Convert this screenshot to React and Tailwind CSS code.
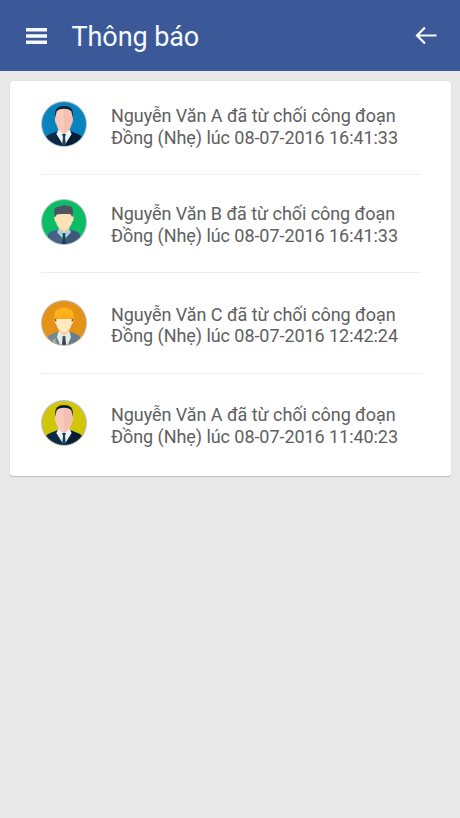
import React from "react";

function SuitMan({ id, bg }) {
  return (
    <svg viewBox="0 0 138 138" className="block h-[46px] w-[46px]">
      <defs>
        <clipPath id={id}>
          <circle cx="69" cy="69" r="66" />
        </clipPath>
      </defs>
      <circle cx="69" cy="69" r="69" fill="#b4c2c6" />
      <g clipPath={`url(#${id})`}>
        <rect width="138" height="138" fill={bg} />
        <path d="M43 44C40 24 52 15 69 15s29 9 26 29l-3 12H46z" fill="#0b2034" />
        <path d="M55 76h28v22l-14 18-14-18z" fill="#e3a793" />
        <path d="M16 138c-8-24-2-34 10-38l26-11 17 49z" fill="#0e2944" />
        <path d="M122 138c8-24 2-34-10-38L86 89l-17 49z" fill="#071d35" />
        <path d="M53 85l16 15 16-15 7 14-23 37-23-37z" fill="#eef3f4" />
        <path d="M63 99h12l-3 9 3 28H63l3-28z" fill="#174158" />
        <path d="M43 49l4-18c5-6 13-8 22-8v73c-13-2-20-13-23-27-4-3-5-15-3-20z" fill="#f8cabc" />
        <path d="M95 49l-4-18c-5-6-13-8-22-8v73c13-2 20-13 23-27 4-3 5-15 3-20z" fill="#f4c0b1" />
      </g>
    </svg>
  );
}

function YoungMan() {
  return (
    <svg viewBox="0 0 138 138" className="block h-[46px] w-[46px]">
      <defs>
        <clipPath id="young">
          <circle cx="69" cy="69" r="66" />
        </clipPath>
      </defs>
      <circle cx="69" cy="69" r="69" fill="#b2c4bb" />
      <g clipPath="url(#young)">
        <rect width="138" height="138" fill="#0abd66" />
        <path d="M20 138v-25c1-11 7-14 15-16l19-8 15 49z" fill="#486087" />
        <path d="M118 138v-25c-1-11-7-14-15-16l-19-8-15 49z" fill="#405678" />
        <path d="M54 76h30v22l-15 12-15-12z" fill="#f1d19f" />
        <path d="M54 87l15 16 15-16 6 13-15 16-6-12-6 12-15-16z" fill="#a8cfe0" />
        <path d="M64 103h10l-2 8 3 27H63l3-27z" fill="#243951" />
        <path d="M41 53l6-8h44l6 8c2 3 0 15-4 16-3 14-12 24-24 24S48 83 45 69c-4-1-6-13-4-16z" fill="#fde2b7" />
        <path d="M43 55c-4-12-5-19-1-28 4-5 13-3 21-7 5-2 13-1 17 1 12 0 16 5 15 12 2 7 1 13-1 22l-5-9c-12-1-25-1-37 0-5 0-7 3-9 9z" fill="#4e5360" />
      </g>
    </svg>
  );
}

function Worker() {
  return (
    <svg viewBox="0 0 138 138" className="block h-[46px] w-[46px]">
      <defs>
        <clipPath id="worker">
          <circle cx="69" cy="69" r="66" />
        </clipPath>
      </defs>
      <circle cx="69" cy="69" r="69" fill="#c4bba9" />
      <g clipPath="url(#worker)">
        <rect width="138" height="138" fill="#e59218" />
        <path d="M20 138c-4-22-1-32 13-36l21-8 15 44z" fill="#708894" />
        <path d="M118 138c4-22 1-32-13-36l-21-8-15 44z" fill="#667d8b" />
        <path d="M55 76h28v22l-14 11-14-11z" fill="#f5cf9b" />
        <path d="M53 93l16 14 16-14 5 18-11 27H59l-11-27z" fill="#e3ebe6" />
        <path d="M64 109h10l-1 6 3 23H62l3-23z" fill="#3c4457" />
        <path d="M42 56h54c3 4 1 14-3 15-4 15-13 26-24 26S49 86 45 71c-4-1-6-11-3-15z" fill="#ffe9c1" />
        <path d="M41 57h5v9l-4-2zM97 57h-5v9l4-2z" fill="#875326" />
        <path d="M40 51c-1-17 7-25 21-26 4-3 12-3 16 0 14 1 22 9 21 26v6H40z" fill="#ffb31b" />
        <path d="M38 50c20-5 42-5 62 0v7H38z" fill="#fcaa19" />
        <path d="M36 119l9 12M43 116l-6 17" stroke="#c9cda9" strokeWidth="3" />
      </g>
    </svg>
  );
}

function Notice({ avatar, name, time, className }) {
  return (
    <li className={`mr-[30px] ml-[31px] flex items-start ${className}`}>
      <div className="shrink-0">{avatar}</div>
      <p className="mt-1 ml-[24.5px] text-[18px] leading-[21.5px] tracking-[-0.06px] whitespace-nowrap text-[#606060]">
        <span className="block">Nguyễn Văn {name} đã từ chối công đoạn</span>
        <span className="block">Đồng (Nhẹ) lúc {time}</span>
      </p>
    </li>
  );
}

export default function App() {
  return (
    <div className="min-h-screen bg-[#e9e9e9] font-['Roboto',sans-serif]">
      <header className="flex h-[71px] items-center bg-[#3b5998] pt-[1px] pr-[23px] pl-[25.5px] text-[#f6faff]">
        <button aria-label="Menu">
          <svg viewBox="0 0 21 16" className="block h-4 w-[21px]" fill="currentColor">
            <path d="M0 0h21v3.5H0zM0 6.25h21v3.5H0zM0 12.5h21V16H0z" />
          </svg>
        </button>
        <h1 className="ml-[25px] pt-[2px] text-[27px] leading-8 font-normal tracking-[-0.08px]">Thông báo</h1>
        <button className="ml-auto" aria-label="Back">
          <svg viewBox="0 0 22 18" className="block h-[18px] w-[22px]" fill="none" stroke="currentColor" strokeWidth="2.2">
            <path d="M21.5 8.5H2M10 0.5l-8 8 8 8" />
          </svg>
        </button>
      </header>
      <main className="px-[9.5px] pt-[9.5px]">
        <ul className="rounded-[3px] bg-white shadow-[0_1px_1px_#bcbcbc,0_0_1px_#c4c4c4]">
          <Notice className="h-[94px] border-b border-[#eeeeee] pt-[20.5px]" name="A" time="08-07-2016 16:41:33" avatar={<SuitMan id="blue" bg="#0883bd" />} />
          <Notice className="h-[98.5px] border-b border-[#eeeeee] pt-[24.5px]" name="B" time="08-07-2016 16:41:33" avatar={<YoungMan />} />
          <Notice className="h-[101px] border-b border-[#eeeeee] pt-[26.5px]" name="C" time="08-07-2016 12:42:24" avatar={<Worker />} />
          <Notice className="h-[102px] pt-[26px]" name="A" time="08-07-2016 11:40:23" avatar={<SuitMan id="yellow" bg="#d2c60b" />} />
        </ul>
      </main>
    </div>
  );
}
